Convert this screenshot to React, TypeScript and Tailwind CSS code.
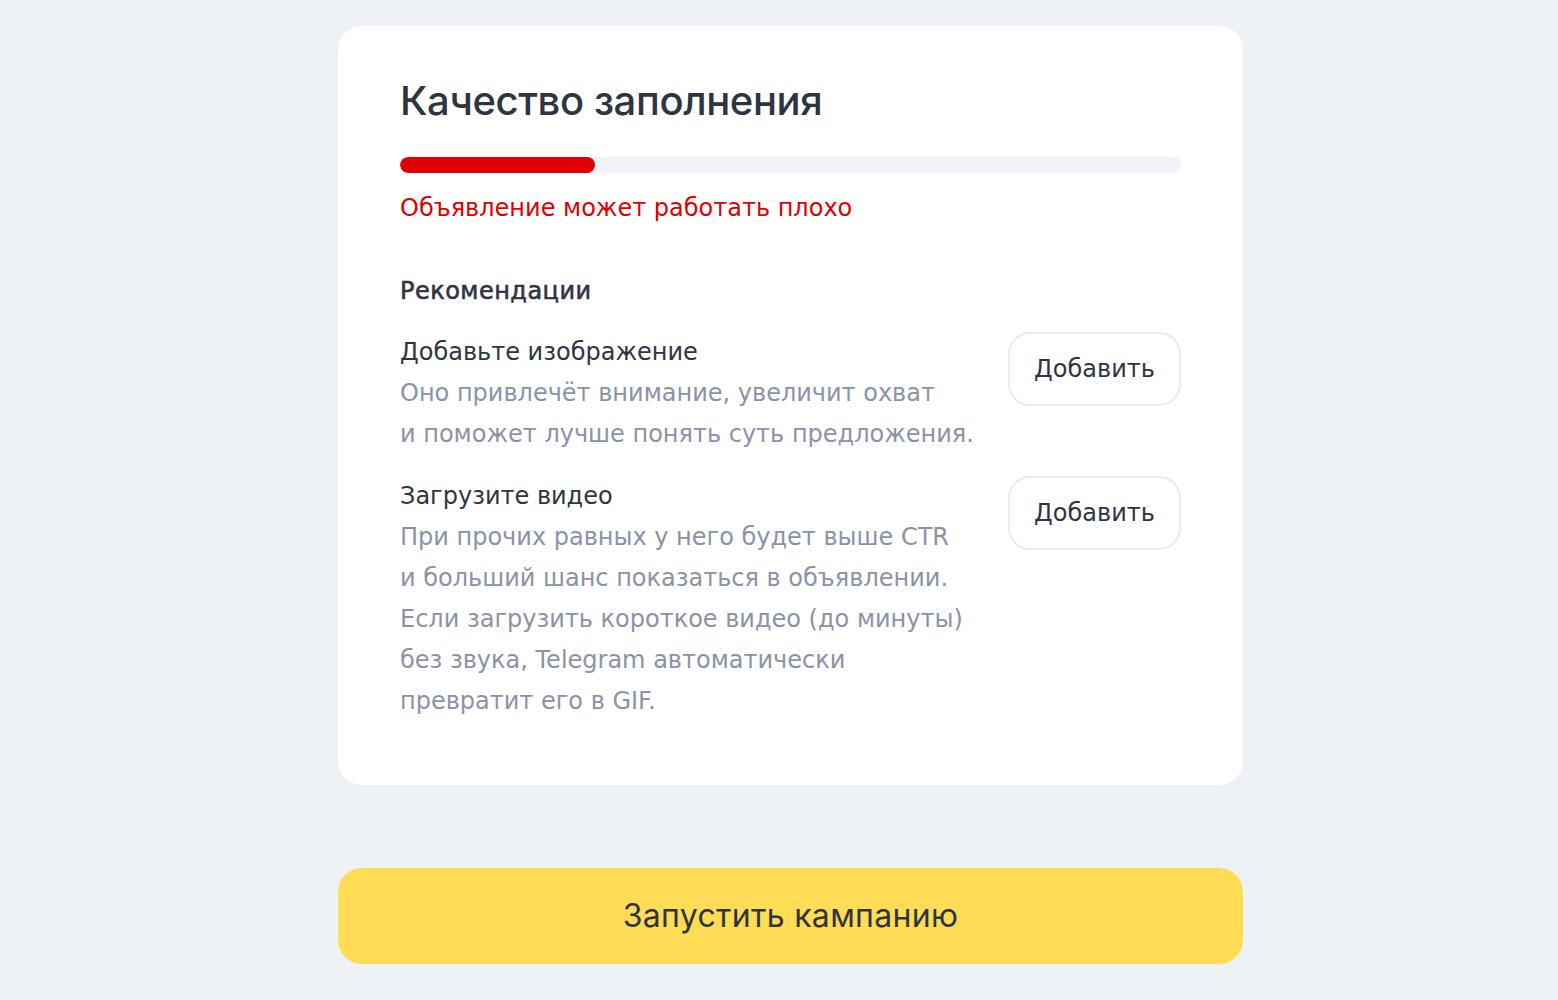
import React from 'react';

const RECOMMENDATIONS = [
  {
    id: 'image',
    title: 'Добавьте изображение',
    lines: ['Оно привлечёт внимание, увеличит охват', 'и поможет лучше понять суть предложения.'],
  },
  {
    id: 'video',
    title: 'Загрузите видео',
    lines: [
      'При прочих равных у него будет выше CTR',
      'и больший шанс показаться в объявлении.',
      'Если загрузить короткое видео (до минуты)',
      'без звука, Telegram автоматически',
      'превратит его в GIF.',
    ],
  },
];

const App: React.FC = () => {
  const quality = 25;

  return (
    <div className="min-h-screen bg-[#eef1f6] font-['Inter',sans-serif] pt-[26px]">
      <div className="w-[905px] ml-[338px]">
        <section className="bg-white rounded-[24px] pl-[62px] pr-[62px] pt-[49px] pb-[63px]">
          <h2 className="text-[40px] leading-[52px] font-medium tracking-[-0.01em] text-[#2f3441]">Качество заполнения</h2>

          {/* progress */}
          <div className="mt-[30px] h-4 w-full rounded-full bg-[#eff2f6] overflow-hidden">
            <div className="h-full rounded-full bg-[#e00000]" style={{ width: `${quality}%` }} />
          </div>
          <div className="font-['DejaVu_Sans',sans-serif]">
            <p className="mt-[19px] text-[24px] leading-[32px] text-[#e00000]">Объявление может работать плохо</p>

            <h3 className="mt-[51px] text-[24px] leading-[32px] tracking-[0.02em] [-webkit-text-stroke:0.6px_#2f3441] text-[#2f3441]">
              Рекомендации
            </h3>

            <div className="mt-[25px] flex flex-col gap-[21px]">
              {RECOMMENDATIONS.map((item) => (
                <div key={item.id} className="flex items-start justify-between">
                  <div className="text-[24px] leading-[41px]">
                    <div className="text-[#2f3441]">{item.title}</div>
                    {item.lines.map((line) => (
                      <div key={line} className="text-[#8a93a6]">{line}</div>
                    ))}
                  </div>
                  <button className="h-[74px] w-[173px] rounded-[22px] border-2 border-[#e8ebf1] bg-white text-[24px] text-[#2f3441]">
                    Добавить
                  </button>
                </div>
              ))}
            </div>
          </div>
        </section>

        <button className="mt-[83px] h-[96px] w-full rounded-[24px] bg-[#ffdc55] text-[32px] tracking-[0.01em] text-[#2f3441]">
          Запустить кампанию
        </button>
      </div>
    </div>
  );
};

export default App;
